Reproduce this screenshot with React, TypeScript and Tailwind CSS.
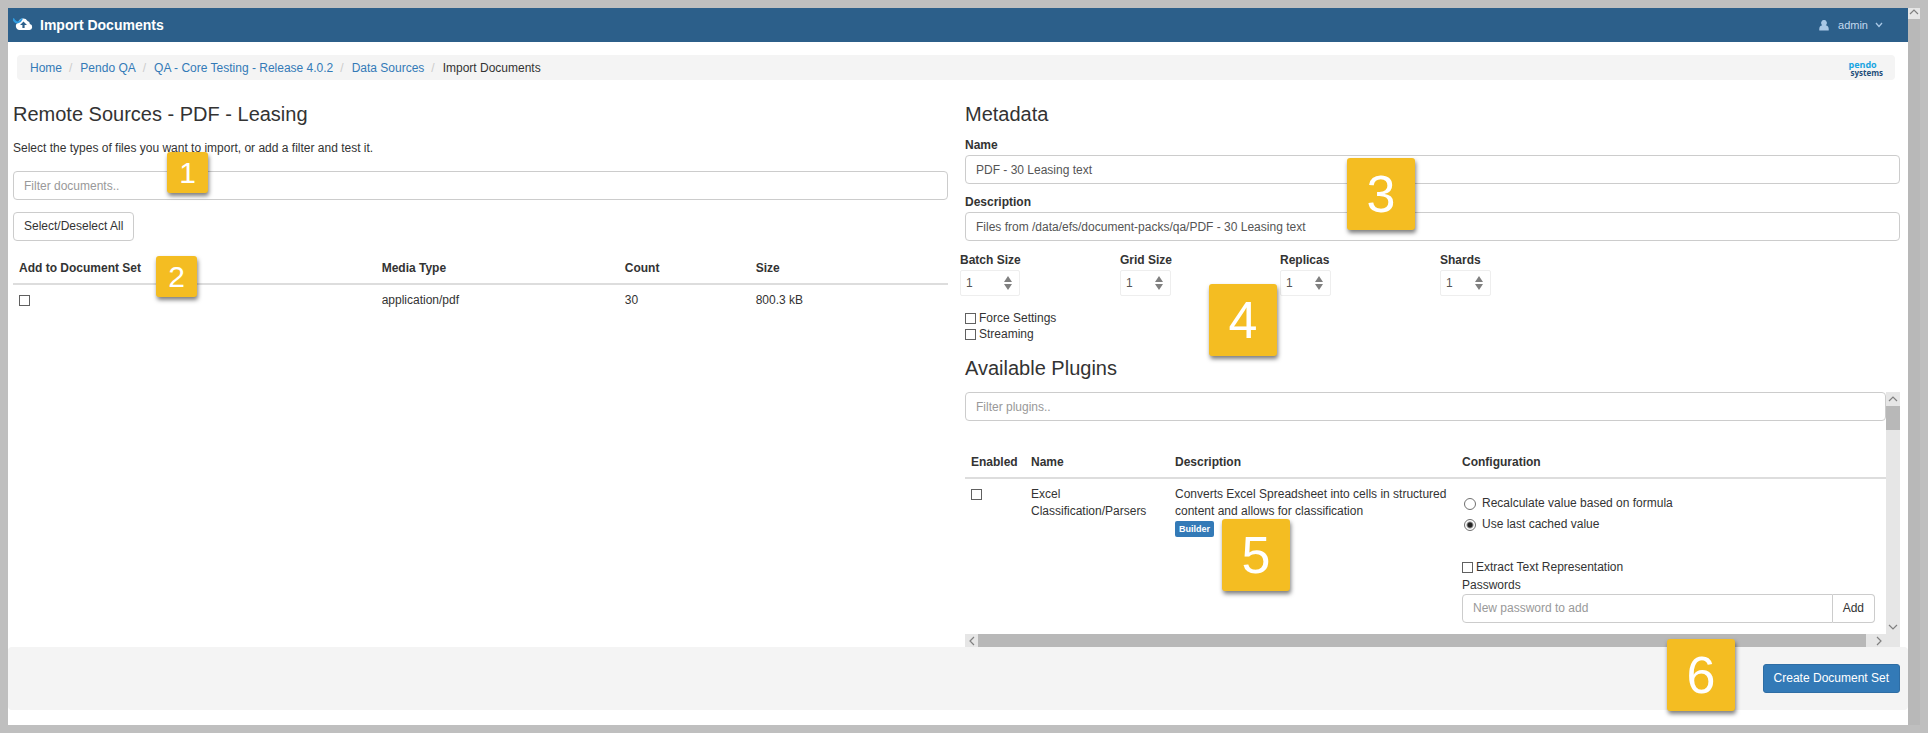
import { useId, type ReactNode } from "react";

const ARROWS: Record<string, string> = {
  up: "M1 6 L5 2 L9 6",
  down: "M1 2 L5 6 L9 2",
  left: "M7 1 L3 5 L7 9",
  right: "M3 1 L7 5 L3 9",
};

function Arrow({ dir }: { dir: "up" | "down" | "left" | "right" }) {
  const flat = dir === "up" || dir === "down";
  return (
    <svg width="10" height={flat ? 8 : 10} viewBox={flat ? "0 0 10 8" : "0 0 10 10"} fill="none" stroke="#808080" strokeWidth="1.2" aria-hidden="true">
      <path d={ARROWS[dir]} />
    </svg>
  );
}

function Marker({ n, small, className }: { n: number; small?: boolean; className: string }) {
  const size = small ? "h-[41px] w-[41px] text-[30px]" : "h-[72px] w-[68px] text-[52px]";
  return (
    <div className={`absolute z-10 flex items-center justify-center rounded-[3px] bg-[#f4bd22] leading-none text-white shadow-[1px_3px_4px_rgba(0,0,0,0.5)] ${size} ${className}`}>
      {n}
    </div>
  );
}

function TextBox({ label, hideLabel, placeholder, value }: { label: string; hideLabel?: boolean; placeholder?: string; value?: string }) {
  const id = useId();
  return (
    <div>
      {!hideLabel && (
        <label htmlFor={id} className="mb-px block font-bold">
          {label}
        </label>
      )}
      <input
        id={id}
        type="text"
        aria-label={hideLabel ? label : undefined}
        placeholder={placeholder}
        defaultValue={value}
        className="block h-[29px] w-full rounded border border-[#ccc] bg-white px-[10px] text-[#555] placeholder:text-[#999]"
      />
    </div>
  );
}

function NumberBox({ label, wide }: { label: string; wide?: boolean }) {
  const id = useId();
  return (
    <div>
      <label htmlFor={id} className="mb-px block font-bold">
        {label}
      </label>
      <div className={`flex h-[26px] items-center justify-between rounded-[2px] border border-[#eee] pl-[5px] pr-[7px] ${wide ? "w-[60px]" : "w-[51px]"}`}>
        <input
          id={id}
          type="number"
          defaultValue={1}
          className="w-6 appearance-none bg-transparent text-[#555] [&::-webkit-inner-spin-button]:appearance-none"
        />
        <svg width="8" height="14" viewBox="0 0 8 14" fill="#808080" aria-hidden="true">
          <path d="M0 6 L4 0 L8 6Z M0 8 L8 8 L4 14Z" />
        </svg>
      </div>
    </div>
  );
}

const BOX = "h-[11px] w-[11px] shrink-0 appearance-none border border-[#606060] bg-white checked:bg-[#606060]";

function Check({ children, className = "" }: { children: ReactNode; className?: string }) {
  return (
    <label className={`flex items-center gap-[3px] ${className}`}>
      <input type="checkbox" className={BOX} />
      {children}
    </label>
  );
}

function Radio({ children, checked }: { children: ReactNode; checked?: boolean }) {
  return (
    <label className="flex h-[21px] items-center gap-[6px]">
      <input
        type="radio"
        name="formula"
        defaultChecked={checked}
        className="h-3 w-3 shrink-0 appearance-none rounded-full border border-[#707070] bg-white checked:bg-[radial-gradient(circle,#222_0_2px,#fff_4px)]"
      />
      {children}
    </label>
  );
}

const CRUMBS = ["Home", "Pendo QA", "QA - Core Testing - Release 4.0.2", "Data Sources"];

export default function App() {
  return (
    <div className="flex min-h-screen bg-[#bfbfbf] p-2 font-['Liberation_Sans',Arial,sans-serif] text-[12px] leading-[17px] text-[#333]">
      <div className="min-w-0 flex-1 bg-white">
        <header className="flex h-[34px] items-center justify-between bg-[#2c5f8a] pl-[5px] pr-[25px] text-white">
          <h1 className="flex items-center gap-[7px] text-[14px] font-bold">
            <svg width="20" height="14" viewBox="0 0 20 14" aria-hidden="true" className="-mt-[3px]">
              <path fill="#fff" d="M6.500 13a3.900 3.900 0 0 1-1.200-7.500 5 5 0 0 1 9.200-1.500 3.300 3.300 0 0 1 2.400 3.100 3 3 0 0 1-.4 5.900z" />
              <path fill="#2c5f8a" d="M10.500 4.500 L14 8 H11.600 V11 H9.400 V8 H7z" />
              <path fill="none" stroke="#2f9be0" strokeWidth="2" d="M0 1.500 Q2 6 5 5.300 Q8 4.500 9 1.500" />
            </svg>
            Import Documents
          </h1>
          <button type="button" className="flex items-center text-[11px] text-[#c3d9ee]">
            <svg width="10" height="11" viewBox="0 0 10 11" fill="#a9c8e6" aria-hidden="true" className="mr-[9px]">
              <path d="M5 0a2.700 2.900 0 0 1 1.800 5.200C9 5.600 10 7 9.700 10.500H.3C0 7 1 5.600 3.200 5.200A2.700 2.900 0 0 1 5 0z" />
            </svg>
            admin
            <svg width="8" height="6" viewBox="0 0 8 6" fill="none" stroke="#a9c8e6" strokeWidth="1.300" aria-hidden="true" className="ml-[7px]">
              <path d="M1 1 L4 4.500 L7 1" />
            </svg>
          </button>
        </header>

        <nav aria-label="Breadcrumb" className="ml-[9px] mr-[13px] mt-[13px] flex h-[25px] items-center justify-between rounded bg-[#f4f4f4] pl-[13px] pr-3">
          <ol className="flex pt-px">
            {CRUMBS.map((c) => (
              <li key={c}>
                <a href="#" className="text-[#337ab7]">
                  {c}
                </a>
                <span className="pl-[7px] pr-2 text-[#ccc]">/</span>
              </li>
            ))}
            <li>Import Documents</li>
          </ol>
          <div className="pt-px font-['Open_Sans',sans-serif] font-bold leading-[9px]">
            <div className="text-[9px] text-[#19a5e1]">pendo</div>
            <div className="pl-[2px] text-[8px] leading-[7px] text-[#1f4e79]">systems</div>
          </div>
        </nav>

        <main className="grid grid-cols-2 gap-[17px] pl-[5px] pr-2">
          <section className="pt-[22px]">
            <h2 className="text-[20px] leading-6">Remote Sources - PDF - Leasing</h2>
            <p className="mb-[14px] mt-[14px]">Select the types of files you want to import, or add a filter and test it.</p>
            <div className="relative">
              <TextBox label="Filter documents" hideLabel placeholder="Filter documents.." />
              <Marker n={1} small className="-top-[19px] left-[154px]" />
            </div>
            <button type="button" className="mt-3 h-[29px] rounded border border-[#ccc] bg-white px-[10px]">
              Select/Deselect All
            </button>
            <div className="relative mt-[13px]">
              <table className="w-full table-fixed text-left">
                <thead>
                  <tr className="border-b-2 border-[#ddd]">
                    <th className="w-[39%] px-[6px] pb-[6px] pt-[6px]">Add to Document Set</th>
                    <th className="w-[26%] px-1">Media Type</th>
                    <th className="w-[14%] px-1">Count</th>
                    <th className="px-1">Size</th>
                  </tr>
                </thead>
                <tbody>
                  <tr>
                    <td className="px-[6px] pt-[7px]">
                      <input type="checkbox" aria-label="Add application/pdf to document set" className={`block ${BOX}`} />
                    </td>
                    <td className="px-1 pt-[7px]">application/pdf</td>
                    <td className="px-1 pt-[7px]">30</td>
                    <td className="px-1 pt-[7px]">800.3 kB</td>
                  </tr>
                </tbody>
              </table>
              <Marker n={2} small className="left-[143px] top-[2px]" />
            </div>
          </section>

          <section className="min-w-0 pt-[22px]">
            <h2 className="text-[20px] leading-6">Metadata</h2>
            <div className="relative mt-[11px] flex flex-col gap-[10px]">
              <TextBox label="Name" value="PDF - 30 Leasing text" />
              <TextBox label="Description" value="Files from /data/efs/document-packs/qa/PDF - 30 Leasing text" />
              <Marker n={3} className="left-[382px] top-[21px]" />
            </div>
            <div className="relative -ml-[5px] mt-[11px] grid grid-cols-[repeat(4,160px)]">
              <NumberBox label="Batch Size" wide />
              <NumberBox label="Grid Size" />
              <NumberBox label="Replicas" />
              <NumberBox label="Shards" />
              <Marker n={4} className="left-[249px] top-[32px]" />
            </div>
            <div className="mt-[14px] leading-4">
              <Check>Force Settings</Check>
              <Check>Streaming</Check>
            </div>
            <h2 className="mb-3 mt-[14px] text-[20px] leading-6">Available Plugins</h2>

            <div className="grid grid-cols-[1fr_14px] grid-rows-[1fr_13px]">
              <div className="h-[242px] min-w-0 overflow-hidden">
                <TextBox label="Filter plugins" hideLabel placeholder="Filter plugins.." />
                <table className="mt-[27px] w-full table-fixed text-left">
                  <thead>
                    <tr className="border-b-2 border-[#ddd]">
                      <th className="w-[60px] px-[6px] py-[6px]">Enabled</th>
                      <th className="w-[144px] px-[6px]">Name</th>
                      <th className="w-[287px] px-[6px]">Description</th>
                      <th className="px-[6px]">Configuration</th>
                    </tr>
                  </thead>
                  <tbody>
                    <tr className="align-top">
                      <td className="px-[6px] pt-[10px]">
                        <input type="checkbox" aria-label="Enable Excel Classification/Parsers" className={`block ${BOX}`} />
                      </td>
                      <td className="px-[6px] pt-[7px]">Excel Classification/Parsers</td>
                      <td className="relative px-[6px] pt-[7px]">
                        Converts Excel Spreadsheet into cells in structured content and allows for classification
                        <span className="mt-px block w-fit rounded-[2px] bg-[#337ab7] px-1 text-[9px] font-bold leading-4 text-white">Builder</span>
                        <Marker n={5} className="left-[53px] top-[40px]" />
                      </td>
                      <td className="pl-[6px] pr-[11px] pt-[14px]">
                        <div className="pl-[2px]">
                          <Radio>Recalculate value based on formula</Radio>
                          <Radio checked>Use last cached value</Radio>
                        </div>
                        <Check className="mb-px mt-6">Extract Text Representation</Check>
                        <label htmlFor="password" className="block">
                          Passwords
                        </label>
                        <div className="flex h-[29px]">
                          <input
                            id="password"
                            type="text"
                            placeholder="New password to add"
                            className="min-w-0 flex-1 rounded-l border border-[#ccc] px-[10px] placeholder:text-[#999]"
                          />
                          <button type="button" className="rounded-r border border-l-0 border-[#ccc] bg-white px-[10px]">
                            Add
                          </button>
                        </div>
                      </td>
                    </tr>
                  </tbody>
                </table>
              </div>
              <div className="flex flex-col items-center bg-[#e6e6e6] py-[3px]">
                <Arrow dir="up" />
                <div className="mt-[3px] h-6 w-full bg-[#b8b8b8]" />
                <div className="flex-1" />
                <Arrow dir="down" />
              </div>
              <div className="flex items-center bg-[#e6e6e6]">
                <div className="flex w-[13px] justify-center">
                  <Arrow dir="left" />
                </div>
                <div className="h-full flex-1 bg-[#b8b8b8]" />
                <div className="flex w-5 justify-center pl-[6px]">
                  <Arrow dir="right" />
                </div>
              </div>
              <div className="bg-[#e6e6e6]" />
            </div>
          </section>
        </main>

        <footer className="relative flex h-[63px] items-center justify-end rounded bg-[#f4f4f4] pr-2">
          <button type="button" className="h-[29px] rounded-[3px] border border-[#2e6da4] bg-[#337ab7] px-[10px] text-white">
            Create Document Set
          </button>
          <Marker n={6} className="-top-[8px] right-[173px]" />
        </footer>
      </div>

      <div className="w-3 bg-[#b8b8b8]" aria-hidden="true">
        <div className="flex h-[11px] items-start justify-center bg-[#e6e6e6]">
          <Arrow dir="up" />
        </div>
      </div>
    </div>
  );
}
